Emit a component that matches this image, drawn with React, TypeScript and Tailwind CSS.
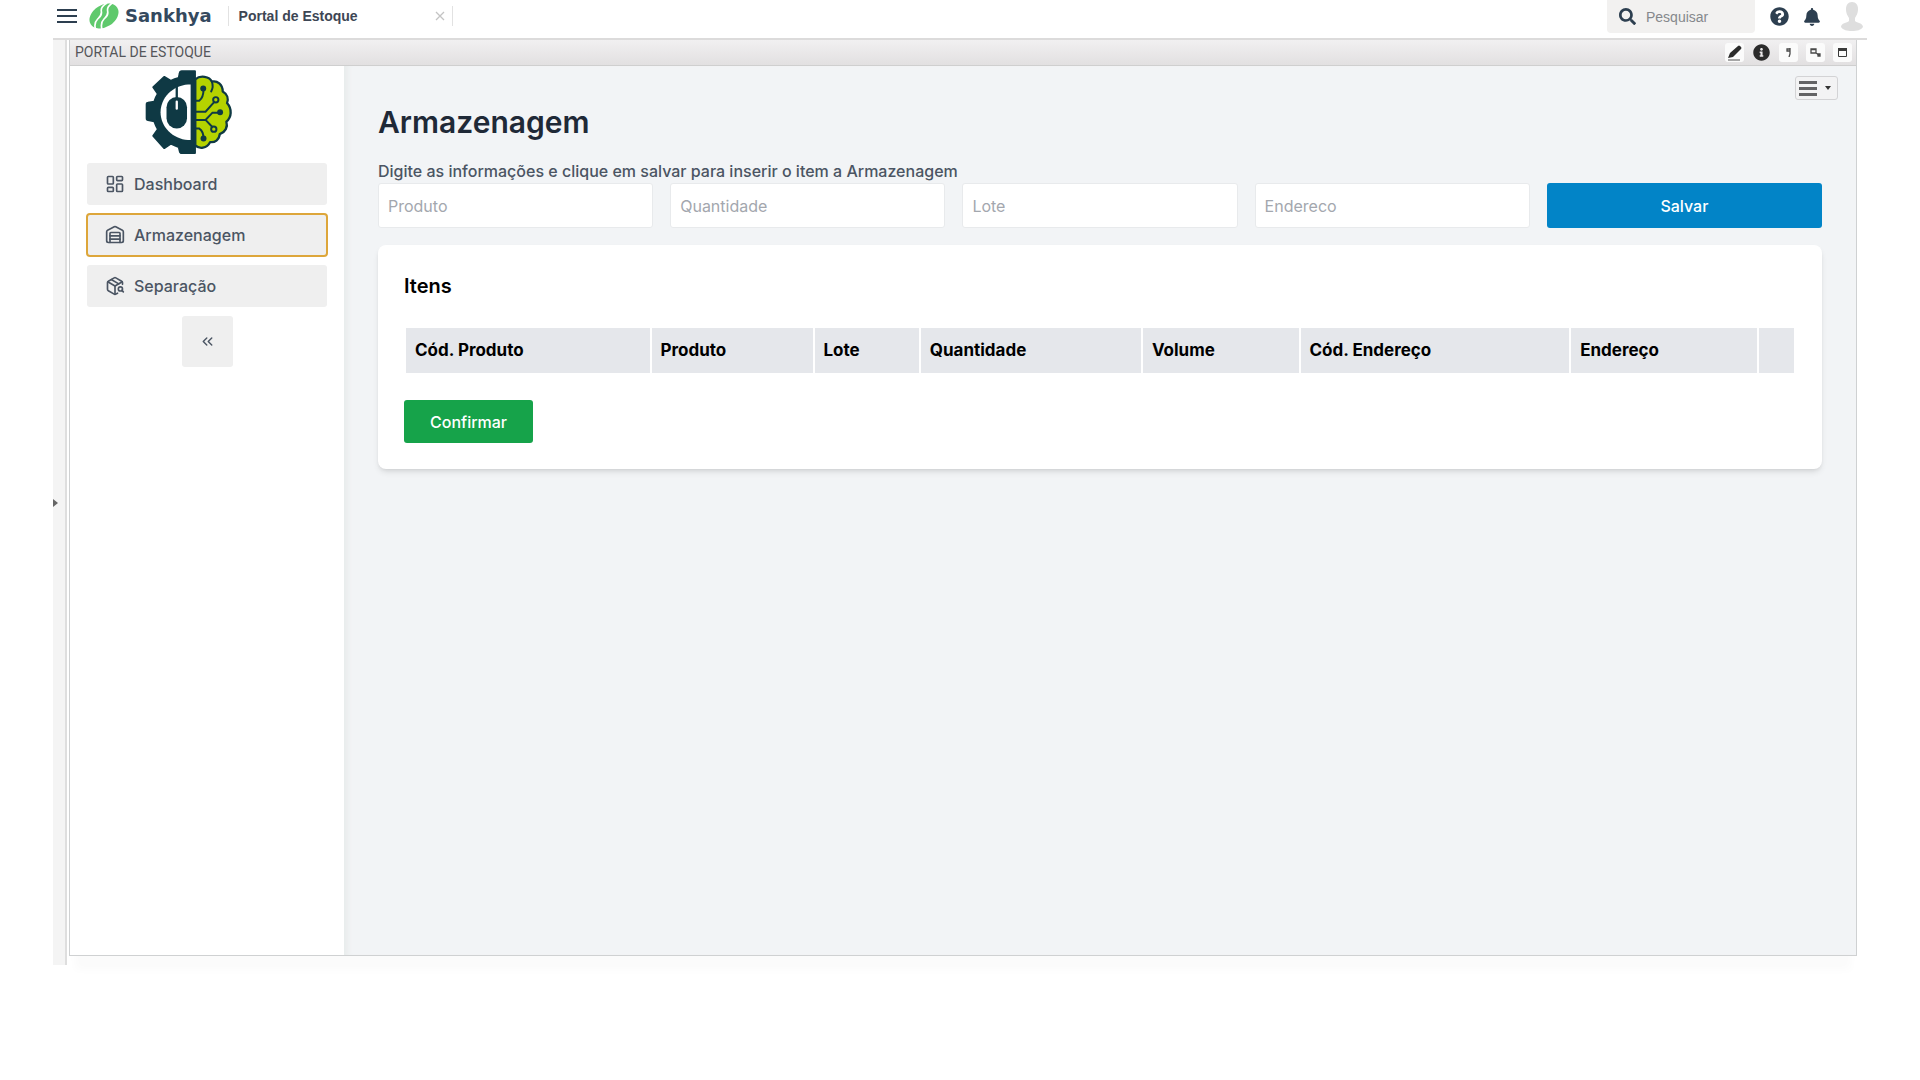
import { useState } from "react";
import { ChevronsLeft, LayoutDashboard, PackageSearch, Warehouse } from "lucide-react";
import { FaBell, FaInfoCircle, FaQuestionCircle, FaSearch } from "react-icons/fa";

const navItems = [
  { label: "Dashboard", icon: LayoutDashboard },
  { label: "Armazenagem", icon: Warehouse },
  { label: "Separação", icon: PackageSearch },
];

const fields = ["Produto", "Quantidade", "Lote", "Endereco"];

const columns = ["Cód. Produto", "Produto", "Lote", "Quantidade", "Volume", "Cód. Endereço", "Endereço", ""];

function SankhyaMark() {
  return (
    <svg width="30" height="26" viewBox="0 0 90 78" aria-hidden="true">
      <ellipse cx="45" cy="39" rx="47" ry="33" transform="rotate(-32 45 39)" fill="#5fc96c" />
      <g fill="none" stroke="#fff" strokeWidth="5">
        <path d="M54 0C40 8 35 14 37 25s-3 15-11 23-11 17-6 32" />
        <path d="M73 -2C58 8 54 14 56 25s-3 15-11 23-10 17-6 32" />
      </g>
    </svg>
  );
}

function BrainGearLogo() {
  return (
    <svg width="88" height="84" viewBox="47 27 264 254" role="img" aria-label="Portal de Estoque">
      <g fill="#0f3944" stroke="#0f3944" strokeLinejoin="round">
        <path
          strokeWidth="6"
          d="M197 31H157q-5 0-6 6l-3 14q-13 3-24 9L104 48 71 79l14 20q-7 11-11 24l-19 3q-4 0-4 5v42q0 5 4 5l19 4q4 12 11 24l-14 20 33 37 20-13q11 6 24 10l3 12q1 6 6 6h40z"
        />
      </g>
      <path d="M184 71v168h-8c-46-3-83-40-83-84s37-81 83-84z" fill="#fff" />
      <rect x="111" y="109" width="62" height="95" rx="31" fill="#0f3944" />
      <path d="M142 72v45" stroke="#0f3944" strokeWidth="7" />
      <path d="M142 123v21" stroke="#fff" strokeWidth="7" strokeLinecap="round" />
      <path
        d="M198 55c15-13 43-9 50 7 16-4 33 9 33 30 14 8 18 22 13 35 16 18 14 43-2 56 5 16-3 32-20 38-2 18-15 26-29 24-10 20-33 22-45 10z"
        fill="#b5d300"
        stroke="#0f3944"
        strokeWidth="7"
        strokeLinejoin="round"
      />
      <g fill="none" stroke="#0f3944" strokeWidth="6">
        <path d="M248 62q6 15-2 30" strokeLinecap="round" />
        <path d="M198 120h12q13-9 13-36" />
        <path d="M198 153h31l28-31" />
        <path d="M198 178h31l21-22h24" />
        <path d="M229 178l22 23" />
        <path d="M198 204h12q13 8 13 30" />
        <circle cx="260" cy="117" r="8" fill="#b5d300" />
        <circle cx="254" cy="206" r="8" fill="#b5d300" />
      </g>
      <g fill="#0f3944">
        <circle cx="222" cy="83" r="9" />
        <circle cx="273" cy="155" r="9" />
        <circle cx="223" cy="234" r="9" />
      </g>
    </svg>
  );
}

function TopBar() {
  return (
    <header className="flex h-[38px] items-start justify-between pl-1 font-['Liberation_Sans',sans-serif]">
      <div className="flex h-8 items-center">
        <button aria-label="Menu" className="flex w-5 flex-col gap-1">
          <span className="h-[2px] bg-[#2d3f50]" />
          <span className="h-[2px] bg-[#2d3f50]" />
          <span className="h-[2px] bg-[#2d3f50]" />
        </button>
        <a href="#" className="ml-3 flex items-center gap-[6px]">
          <SankhyaMark />
          <span className="font-['DejaVu_Sans',sans-serif] text-lg leading-8 font-bold text-[#34495e]">Sankhya</span>
        </a>
        <div className="ml-4 flex h-5 w-[225px] items-center justify-between border-x border-[#e2e2e2] pr-[7px] pl-[10px]">
          <span className="text-sm font-bold text-[#3d4654]">Portal de Estoque</span>
          <button aria-label="Fechar aba">
            <svg width="10" height="10" viewBox="0 0 10 10" stroke="#c4c4c4" strokeWidth="1.3">
              <path d="M1 1l8 8M9 1L1 9" />
            </svg>
          </button>
        </div>
      </div>
      <div className="flex items-center">
        <label className="flex h-[33px] w-[148px] items-center gap-[10px] rounded-b bg-[#f2f1f0] pl-3">
          <FaSearch size={17} color="#2d3f50" />
          <input
            type="search"
            aria-label="Pesquisar"
            placeholder="Pesquisar"
            className="w-24 bg-transparent text-sm outline-none placeholder:text-[#85888c]"
          />
        </label>
        <button aria-label="Ajuda" className="ml-[15px]">
          <FaQuestionCircle size={19} color="#2d3f50" />
        </button>
        <button aria-label="Notificações" className="ml-[14px]">
          <FaBell size={18} color="#2d3f50" />
        </button>
        <button aria-label="Perfil" className="mr-1 ml-[20px]">
          <svg width="22" height="29" viewBox="0 0 22 29" fill="#dedede">
            <path d="M11 0c4 0 6 3 6 7 0 5-2 7-3 9v3c2 2 8 2 8 6-2 3-6 4-11 4S2 28 0 25c0-4 6-4 8-6v-3c-1-2-3-4-3-9 0-4 2-7 6-7z" />
          </svg>
        </button>
      </div>
    </header>
  );
}

function TitleBar() {
  const tool = "flex size-[19px] items-center justify-center rounded-[3px] bg-[#fbfbfb]";
  return (
    <div className="flex h-[26px] items-center justify-between border-b border-[#cfcfcf] bg-linear-to-b from-[#f1f0f1] to-[#e2e0e1] pr-1 pb-px pl-[5px]">
      <h2 className="font-[Roboto,sans-serif] text-sm text-[#55565a]">PORTAL DE ESTOQUE</h2>
      <div className="flex gap-2">
        <button aria-label="Editar" className={tool}>
          <svg width="16" height="17" viewBox="0 0 16 17">
            <path d="M1 14l2-5 8-7q1-1 2 0l1 1q1 1 0 2l-8 8z" fill="#2b2b2b" />
            <path d="M1 16h12" stroke="#8a8a8a" strokeWidth="1.5" />
          </svg>
        </button>
        <button aria-label="Informações" className="flex size-[19px] items-center justify-center">
          <FaInfoCircle size={17} color="#2b2b2b" />
        </button>
        <button aria-label="Voltar" className={tool}>
          <svg width="6" height="9" viewBox="0 0 6 9" fill="none" stroke="#4a4a4a" strokeWidth="1.3">
            <path d="M4 0v6L3 9M4 1H1v2h3" />
          </svg>
        </button>
        <button aria-label="Restaurar" className={tool}>
          <svg width="11" height="9" viewBox="0 0 11 9" fill="none" stroke="#4a4a4a" strokeWidth="1.3">
            <path d="M1 1h5v4H1zM1 1.5h5M6 5l3 2" />
            <path d="M8 6h2v2H8z" fill="#4a4a4a" />
          </svg>
        </button>
        <button aria-label="Maximizar" className={tool}>
          <svg width="9" height="9" viewBox="0 0 9 9" fill="none" stroke="#3a3a3a">
            <path d="M.5 1h8v7.5h-8z" />
            <path d="M0 1.5h9" strokeWidth="3" />
          </svg>
        </button>
      </div>
    </div>
  );
}

function Sidebar() {
  const [active, setActive] = useState("Armazenagem");
  return (
    <aside className="flex w-[274px] shrink-0 flex-col items-center bg-white px-[17px] pt-1">
      <div className="w-full pl-[58px]">
        <BrainGearLogo />
      </div>
      <nav className="mt-[9px] flex w-full flex-col gap-[9px] pb-[9px]">
        {navItems.map(({ label, icon: Icon }) => (
          <button
            key={label}
            onClick={() => setActive(label)}
            className={
              "flex h-[42px] items-center gap-[9px] rounded-[3px] bg-[#efefef] pl-[18px] text-base font-medium text-[#4b5563]" +
              (label === active ? " outline-2 -outline-offset-1 outline-[#dda63a]" : "")
            }
          >
            <Icon size={20} strokeWidth={2} />
            {label}
          </button>
        ))}
      </nav>
      <button aria-label="Recolher menu" className="flex size-[51px] items-center justify-center rounded-[3px] bg-[#efefef] text-[#4b5563]">
        <ChevronsLeft size={17} />
      </button>
    </aside>
  );
}

export default function App() {
  return (
    <div className="flex min-h-screen flex-col bg-white px-[53px] pb-[124px] font-[Inter,sans-serif]">
      <TopBar />
      <div className="flex flex-1 border-t-2 border-[#dcdbdb]">
        <div className="-mb-[9px] flex w-[14px] shrink-0 items-center border-r-2 border-[#dedede] bg-[#f4f4f4]">
          <button aria-label="Expandir painel">
            <svg width="5" height="8" viewBox="0 0 5 8" fill="#666">
              <path d="M0 0l5 4-5 4z" />
            </svg>
          </button>
        </div>
        <div className="mr-[10px] ml-[2px] flex flex-1 flex-col border border-t-0 border-[#cfd1d2] shadow-[0_20px_8px_-6px_#fbfbfb]">
          <TitleBar />
          <div className="flex flex-1">
            <Sidebar />
            <main className="flex-1 bg-[#f2f4f6] shadow-[inset_7px_0_5px_-3px_#e9ecec]">
              <div className="flex justify-end pt-[10px] pr-[18px]">
                <button aria-label="Opções" className="flex h-6 w-[43px] items-center justify-between rounded-[3px] border border-[#d3d3d5] bg-[#f3f3f4] pr-[6px] pl-[3px]">
                  <span className="flex w-[18px] flex-col gap-[3px]">
                    <span className="h-[3px] bg-[#636365]" />
                    <span className="h-[3px] bg-[#636365]" />
                    <span className="h-[3px] bg-[#636365]" />
                  </span>
                  <svg width="6" height="4" viewBox="0 0 6 4" fill="#333">
                    <path d="M0 0h6L3 4z" />
                  </svg>
                </button>
              </div>
              <div className="px-[34px] pt-1">
                <h1 className="text-[30px] leading-9 font-semibold text-[#1f2937]">Armazenagem</h1>
                <p className="mt-[19px] text-base font-medium text-[#4b5563]">
                  Digite as informações e clique em salvar para inserir o item a Armazenagem
                </p>
                <form className="grid grid-cols-5 gap-[17px]" onSubmit={(e) => e.preventDefault()}>
                  {fields.map((field) => (
                    <input
                      key={field}
                      aria-label={field}
                      placeholder={field}
                      className="h-[45px] w-full rounded-[3px] border border-[#e8eaec] bg-white px-[9px] text-base text-gray-800 placeholder:text-[#a3a7ae]"
                    />
                  ))}
                  <button className="h-[45px] rounded-[3px] bg-[#0284c7] text-base font-medium text-white">Salvar</button>
                </form>
                <section className="mt-[17px] rounded-lg bg-white p-[26px] shadow-md">
                  <h2 className="text-xl leading-[30px] font-semibold text-black">Itens</h2>
                  <table className="mt-[25px] w-full border-separate border-spacing-x-[2px] border-spacing-y-[2px]">
                    <thead>
                      <tr>
                        {columns.map((column) => (
                          <th key={column} scope="col" className="h-[45px] bg-[#e5e7eb] px-[9px] text-left text-[17px] font-bold text-black">
                            {column}
                          </th>
                        ))}
                      </tr>
                    </thead>
                  </table>
                  <button className="mt-[25px] h-[43px] rounded-[3px] bg-[#16a34a] px-[26px] text-base font-medium text-white">Confirmar</button>
                </section>
              </div>
            </main>
          </div>
        </div>
      </div>
    </div>
  );
}
